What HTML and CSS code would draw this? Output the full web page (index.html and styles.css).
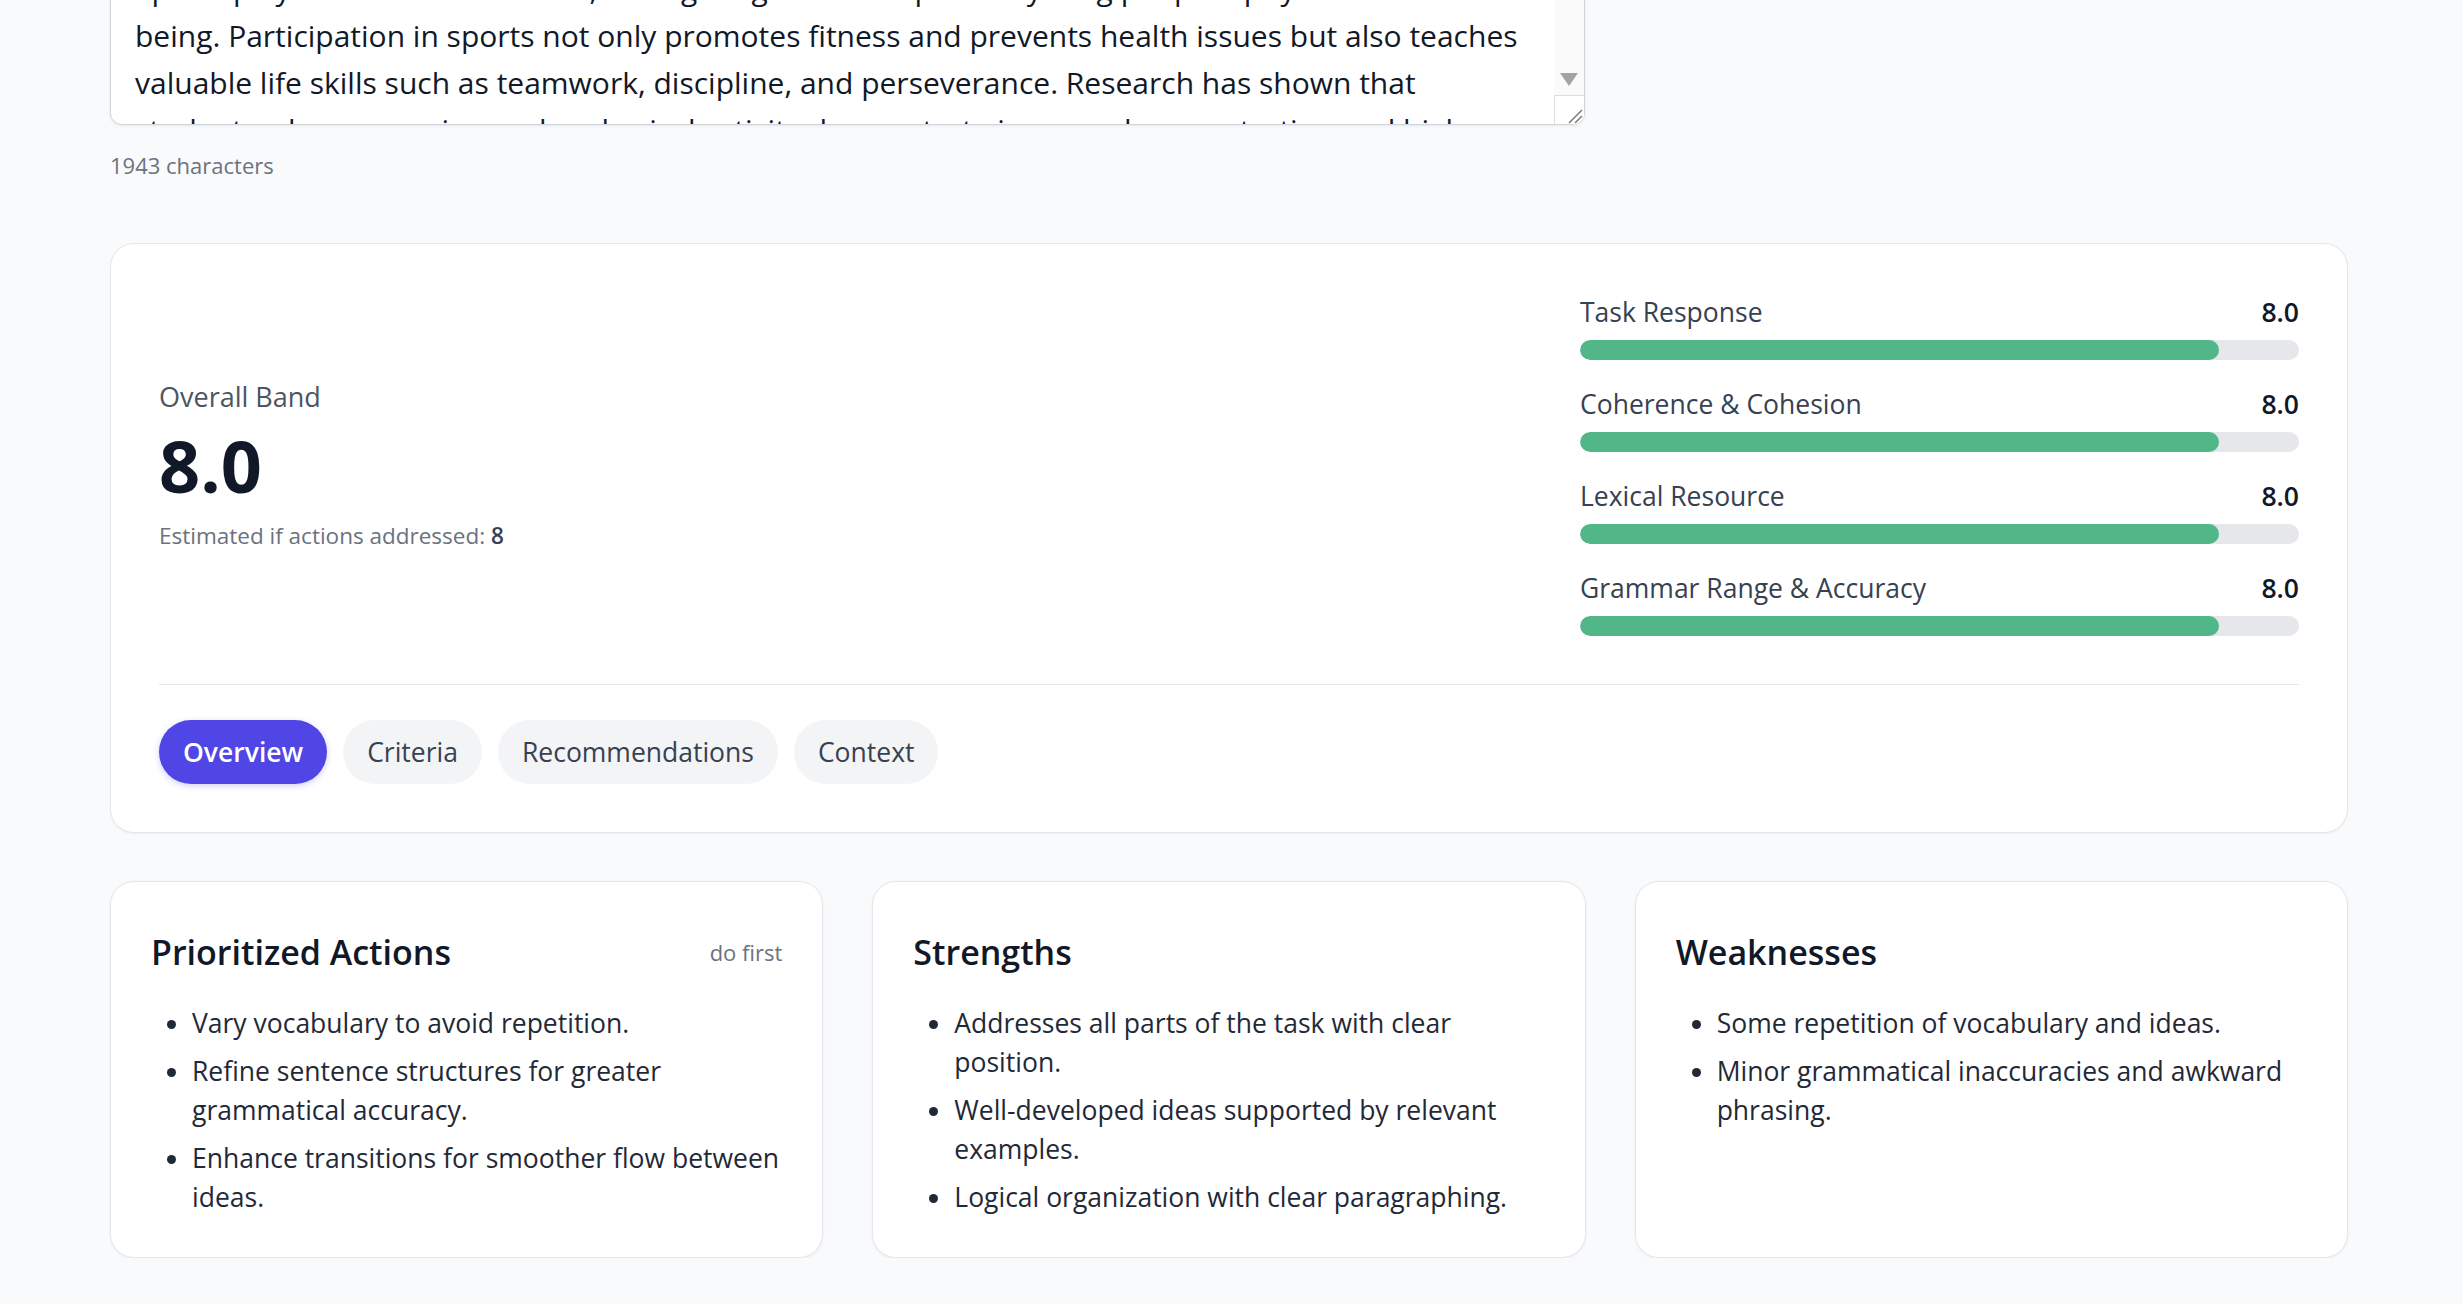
FILE: index.html
```html
<!DOCTYPE html>
<html lang="en">
<head>
<meta charset="utf-8">
<title>Essay Evaluation</title>
<link rel="stylesheet" href="styles.css">
</head>
<body>
<main class="page">
  <section class="editor">
    <div class="textarea">
      <div class="ta-text">
        <span class="ta-line">Sports play a vital role in schools, having a significant impact on young people’s physical and mental well-</span>
        <span class="ta-line">being. Participation in sports not only promotes fitness and prevents health issues but also teaches</span>
        <span class="ta-line">valuable life skills such as teamwork, discipline, and perseverance. Research has shown that</span>
        <span class="ta-line">students who engage in regular physical activity demonstrate improved concentration and higher</span>
        <span class="ta-line">academic achievement than their peers who remain inactive throughout the school year.</span>
      </div>
      <div class="ta-scroll">
        <span class="ta-arrow"></span>
        <span class="ta-grip">
          <svg width="29" height="28" viewBox="0 0 29 28"><path d="M27 14 L14 27 M27 20 L20 27" stroke="#7a7a7a" stroke-width="1.5" fill="none"/></svg>
        </span>
      </div>
    </div>
    <p class="char-count">1943 characters</p>
  </section>

  <section class="score-card">
    <div class="score-top">
      <div class="overall">
        <div class="overall-label">Overall Band</div>
        <div class="overall-value">8.0</div>
        <div class="overall-est">Estimated if actions addressed: <strong>8</strong></div>
      </div>
      <div class="criteria">
        <div class="crit">
          <div class="crit-head"><span>Task Response</span><span class="crit-val">8.0</span></div>
          <div class="bar"><div class="bar-fill" style="width:88.89%"></div></div>
        </div>
        <div class="crit">
          <div class="crit-head"><span>Coherence &amp; Cohesion</span><span class="crit-val">8.0</span></div>
          <div class="bar"><div class="bar-fill" style="width:88.89%"></div></div>
        </div>
        <div class="crit">
          <div class="crit-head"><span>Lexical Resource</span><span class="crit-val">8.0</span></div>
          <div class="bar"><div class="bar-fill" style="width:88.89%"></div></div>
        </div>
        <div class="crit">
          <div class="crit-head"><span>Grammar Range &amp; Accuracy</span><span class="crit-val">8.0</span></div>
          <div class="bar"><div class="bar-fill" style="width:88.89%"></div></div>
        </div>
      </div>
    </div>
    <nav class="tabs">
      <button class="tab active">Overview</button>
      <button class="tab">Criteria</button>
      <button class="tab">Recommendations</button>
      <button class="tab">Context</button>
    </nav>
  </section>

  <section class="panels">
    <article class="panel">
      <div class="panel-head">
        <h3 class="panel-title">Prioritized Actions</h3>
        <span class="panel-note">do first</span>
      </div>
      <ul class="panel-list">
        <li>Vary vocabulary to avoid repetition.</li>
        <li>Refine sentence structures for greater grammatical accuracy.</li>
        <li>Enhance transitions for smoother flow between ideas.</li>
      </ul>
    </article>
    <article class="panel">
      <div class="panel-head">
        <h3 class="panel-title">Strengths</h3>
      </div>
      <ul class="panel-list">
        <li>Addresses all parts of the task with clear position.</li>
        <li>Well-developed ideas supported by relevant examples.</li>
        <li>Logical organization with clear paragraphing.</li>
      </ul>
    </article>
    <article class="panel">
      <div class="panel-head">
        <h3 class="panel-title">Weaknesses</h3>
      </div>
      <ul class="panel-list">
        <li>Some repetition of vocabulary and ideas.</li>
        <li>Minor grammatical inaccuracies and awkward phrasing.</li>
      </ul>
    </article>
  </section>
</main>
</body>
</html>
```

FILE: styles.css
```css
html, body {
  margin: 0;
  padding: 0;
}

body {
  background: #f9fafb;
  font-family: "Open Sans", "Noto Sans", sans-serif;
  color: #111827;
  overflow: hidden;
}

.page {
  margin-left: 110px;
  width: 2238px;
}

/* ---------- editor ---------- */
.editor {
  width: 1475px;
  margin-top: -60px;
}

.textarea {
  display: flex;
  box-sizing: border-box;
  height: 185px;
  background: #ffffff;
  border: 1px solid #d1d5db;
  border-radius: 12px;
  box-shadow: 0 1px 3px rgba(0, 0, 0, 0.08);
  overflow: hidden;
}

.ta-text {
  flex: 1;
  min-width: 0;
  padding: 24px 0 0 24px;
  font-size: 30px;
  line-height: 47px;
  color: #111827;
  overflow: hidden;
}

.ta-line {
  display: block;
  white-space: nowrap;
}

.ta-scroll {
  width: 30px;
  flex: none;
  background: #fafafa;
  display: flex;
  flex-direction: column;
  justify-content: flex-end;
  align-items: center;
}

.ta-arrow {
  width: 0;
  height: 0;
  border-left: 9px solid transparent;
  border-right: 9px solid transparent;
  border-top: 13px solid #a3a3a3;
  margin-bottom: 9px;
}

.ta-grip {
  display: block;
  box-sizing: border-box;
  width: 30px;
  height: 29px;
  border-top: 1px solid #dedede;
  border-left: 1px solid #dedede;
  background: #ffffff;
}

.ta-grip svg {
  display: block;
}

.char-count {
  margin: 24px 0 0;
  font-size: 22px;
  line-height: 32px;
  color: #6b7280;
}

/* ---------- score card ---------- */
.score-card {
  margin-top: 62px;
  background: #ffffff;
  border: 1px solid #e5e7eb;
  border-radius: 24px;
  padding: 48px;
  box-shadow: 0 1px 2px rgba(0, 0, 0, 0.05);
}

.score-top {
  display: flex;
  align-items: center;
  gap: 48px;
}

.overall {
  flex: 1;
}

.overall-label {
  font-size: 27px;
  line-height: 40px;
  font-weight: 500;
  color: #4b5563;
}

.overall-value {
  margin-top: 12px;
  font-size: 72px;
  line-height: 72px;
  font-weight: 700;
  color: #111827;
}

.overall-est {
  margin-top: 19px;
  font-size: 22.5px;
  line-height: 32px;
  color: #6b7280;
}

.overall-est strong {
  font-weight: 600;
  color: #374151;
}

.criteria {
  width: 719px;
  display: flex;
  flex-direction: column;
  gap: 24px;
}

.crit-head {
  display: flex;
  justify-content: space-between;
  font-size: 26.5px;
  line-height: 40px;
  color: #374151;
}

.crit-val {
  font-weight: 600;
  color: #111827;
}

.bar {
  margin-top: 8px;
  height: 20px;
  border-radius: 10px;
  background: #e5e7eb;
  overflow: hidden;
}

.bar-fill {
  height: 100%;
  background: #52b788;
  border-radius: 10px;
}

.tabs {
  margin-top: 48px;
  border-top: 1px solid #e5e7eb;
  padding-top: 35px;
  display: flex;
  gap: 16px;
}

.tab {
  height: 64px;
  padding: 0 24px;
  border: 0;
  border-radius: 32px;
  background: #f3f4f6;
  color: #374151;
  font-family: inherit;
  font-size: 26.5px;
  line-height: 64px;
  font-weight: 500;
  cursor: pointer;
}

.tab.active {
  background: #4f46e5;
  color: #ffffff;
  font-weight: 600;
  box-shadow: 0 2px 6px rgba(79, 70, 229, 0.25);
}

/* ---------- panels ---------- */
.panels {
  margin-top: 48px;
  display: grid;
  grid-template-columns: repeat(3, 1fr);
  gap: 49px;
}

.panel {
  background: #ffffff;
  border: 1px solid #e5e7eb;
  border-radius: 24px;
  padding: 42px 40px 40px;
  box-shadow: 0 1px 3px rgba(0, 0, 0, 0.06);
}

.panel-head {
  display: flex;
  justify-content: space-between;
  align-items: center;
}

.panel-title {
  margin: 0;
  font-size: 34px;
  line-height: 56px;
  font-weight: 600;
  color: #111827;
}

.panel-note {
  font-size: 22px;
  color: #6b7280;
}

.panel-list {
  margin: 24px 0 0;
  padding-left: 41px;
  font-size: 26.5px;
  line-height: 39px;
  color: #1f2937;
}

.panel-list li + li {
  margin-top: 9px;
}
```
